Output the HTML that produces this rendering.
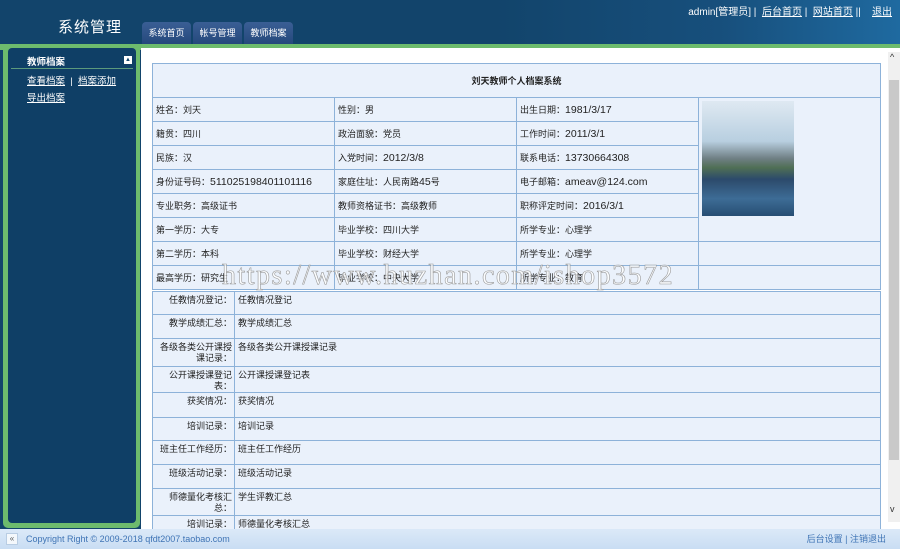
<!DOCTYPE html>
<html><head><meta charset="utf-8">
<style>
*{margin:0;padding:0;box-sizing:border-box}
body{width:900px;height:549px;overflow:hidden;background:#12446b;font-family:"Liberation Sans","Noto Sans CJK SC",sans-serif;position:relative}
.abs{position:absolute}
.hdr{left:0;top:0;width:900px;height:46px;background:linear-gradient(90deg,#12446b 0%,#12446b 55%,#174f7c 80%,#1f6aa0 100%)}
.title{left:58px;top:16px;color:#fff;font-size:15px;font-weight:normal;letter-spacing:1px}
.tab{top:22px;height:22px;background:linear-gradient(#3a5f95,#25487c);border-radius:4px 4px 0 0;color:#fff;font-size:9px;line-height:22px;text-align:center}
.top{right:8px;top:3px;color:#fff;font-size:10px}
.top a{color:#fff;text-decoration:underline}
.green{left:0;top:44px;width:900px;height:6px;background:#6dbb6d}
.side{left:3px;top:44px;width:137px;height:484px;background:#6dbb6d;border-radius:5px}
.sidein{left:8px;top:48px;width:128px;height:475px;background:#0f3f66;border-radius:4px}
.main{left:141px;top:48px;width:759px;height:481px;background:#fff}
.sb{left:888px;top:52px;width:12px;height:470px;background:#f0f0f0}
.foot{left:0;top:529px;width:900px;height:20px;background:linear-gradient(#dbe9f8,#c9ddf3);font-size:9px;line-height:20px}
table{border-collapse:collapse;font-size:9px;color:#222;table-layout:fixed}
td{border:1px solid #8db2d9;background:#eaf1fb;padding:0 3px;vertical-align:middle;overflow:hidden}
.num{font-size:10.5px}
.lo td{vertical-align:top;line-height:11px;padding-top:3px}
.lo td:first-child{text-align:right;padding-right:2px}
</style></head><body>
<div class="abs hdr"></div>
<div class="abs title">系统管理</div>
<div class="abs tab" style="left:142px;width:49px">系统首页</div>
<div class="abs tab" style="left:193px;width:49px">帐号管理</div>
<div class="abs tab" style="left:244px;width:49px">教师档案</div>
<div class="abs top">admin[管理员] | &nbsp;<a>后台首页</a> | &nbsp;<a>网站首页</a> || &nbsp;&nbsp;&nbsp;<a>退出</a></div>
<div class="abs green"></div>
<div class="abs side"></div>
<div class="abs sidein"></div>
<div class="abs" style="left:27px;top:54px;color:#fff;font-size:9.5px;font-weight:bold">教师档案</div>
<div class="abs" style="left:124px;top:56px;width:8px;height:8px;background:#fff;font-size:6px;line-height:8px;text-align:center;color:#12446b">▲</div>
<div class="abs" style="left:11px;top:68px;width:122px;height:1px;background:#5c9a7c"></div>
<div class="abs" style="left:27px;top:73px;color:#fff;font-size:9.5px"><u>查看档案</u> &nbsp;| &nbsp;<u>档案添加</u></div>
<div class="abs" style="left:27px;top:90px;color:#fff;font-size:9.5px"><u>导出档案</u></div>
<div class="abs main"></div>
<div class="abs sb"><div style="position:absolute;top:0;left:2px;font-size:9px;color:#333">^</div><div style="position:absolute;top:28px;left:1px;width:10px;height:380px;background:#c9c9c9"></div><div style="position:absolute;top:452px;left:2px;font-size:9px;color:#333">v</div></div>

<table class="abs" style="left:152px;top:63px;width:729px">
<tr style="height:34px"><td colspan="4" style="text-align:center;font-weight:bold">刘天教师个人档案系统</td></tr>
<tr style="height:24px"><td style="width:181px">姓名：刘天</td><td style="width:182px">性别：男</td><td style="width:183px">出生日期：<span class="num">1981/3/17</span></td><td rowspan="6" style="vertical-align:top;padding-top:3px"><div style="width:92px;height:115px;background:linear-gradient(#dfe9f2 0%,#b8cfe0 35%,#6f7f84 50%,#4f6f55 58%,#2c4a6b 68%,#3d6c96 85%,#274e73 100%)"></div></td></tr>
<tr style="height:24px"><td>籍贯：四川</td><td>政治面貌：党员</td><td>工作时间：<span class="num">2011/3/1</span></td></tr>
<tr style="height:24px"><td>民族：汉</td><td>入党时间：<span class="num">2012/3/8</span></td><td>联系电话：<span class="num">13730664308</span></td></tr>
<tr style="height:24px"><td>身份证号码：<span class="num">511025198401101116</span></td><td>家庭住址：人民南路<span class="num">45</span>号</td><td>电子邮箱：<span class="num">ameav@124.com</span></td></tr>
<tr style="height:24px"><td>专业职务：高级证书</td><td>教师资格证书：高级教师</td><td>职称评定时间：<span class="num">2016/3/1</span></td></tr>
<tr style="height:24px"><td>第一学历：大专</td><td>毕业学校：四川大学</td><td>所学专业：心理学</td></tr>
<tr style="height:24px"><td>第二学历：本科</td><td>毕业学校：财经大学</td><td>所学专业：心理学</td><td></td></tr>
<tr style="height:24px"><td>最高学历：研究生</td><td>毕业学校：中央大学</td><td>所学专业：教育</td><td></td></tr>
</table>
<table class="abs lo" style="left:152px;top:291px;width:729px">
<tr style="height:23px"><td style="width:82px">任教情况登记：</td><td>任教情况登记</td></tr>
<tr style="height:24px"><td>教学成绩汇总：</td><td>教学成绩汇总</td></tr>
<tr style="height:28px"><td>各级各类公开课授课记录：</td><td>各级各类公开课授课记录</td></tr>
<tr style="height:25px"><td>公开课授课登记表：</td><td>公开课授课登记表</td></tr>
<tr style="height:25px"><td>获奖情况：</td><td>获奖情况</td></tr>
<tr style="height:23px"><td>培训记录：</td><td>培训记录</td></tr>
<tr style="height:24px"><td>班主任工作经历：</td><td>班主任工作经历</td></tr>
<tr style="height:24px"><td>班级活动记录：</td><td>班级活动记录</td></tr>
<tr style="height:27px"><td>师德量化考核汇总：</td><td>学生评教汇总</td></tr>
<tr style="height:24px"><td>培训记录：</td><td>师德量化考核汇总</td></tr>
</table>
<div class="abs" style="left:222px;top:260px;font-family:'Liberation Serif',serif;font-size:28px;color:rgba(255,255,255,0.75);-webkit-text-stroke:0.6px #999;letter-spacing:1.5px">https://www.huzhan.com/ishop3572</div>
<div class="abs foot"><span style="position:absolute;left:6px;top:4px;width:12px;height:12px;background:#f4f8fc;border:1px solid #b9cde3;font-size:8px;line-height:10px;text-align:center;color:#555">«</span><span style="position:absolute;left:26px;color:#3f74b5">Copyright Right © 2009-2018 qfdt2007.taobao.com</span><span style="position:absolute;right:14px;color:#3f74b5">后台设置 | 注销退出</span></div>
</body></html>
